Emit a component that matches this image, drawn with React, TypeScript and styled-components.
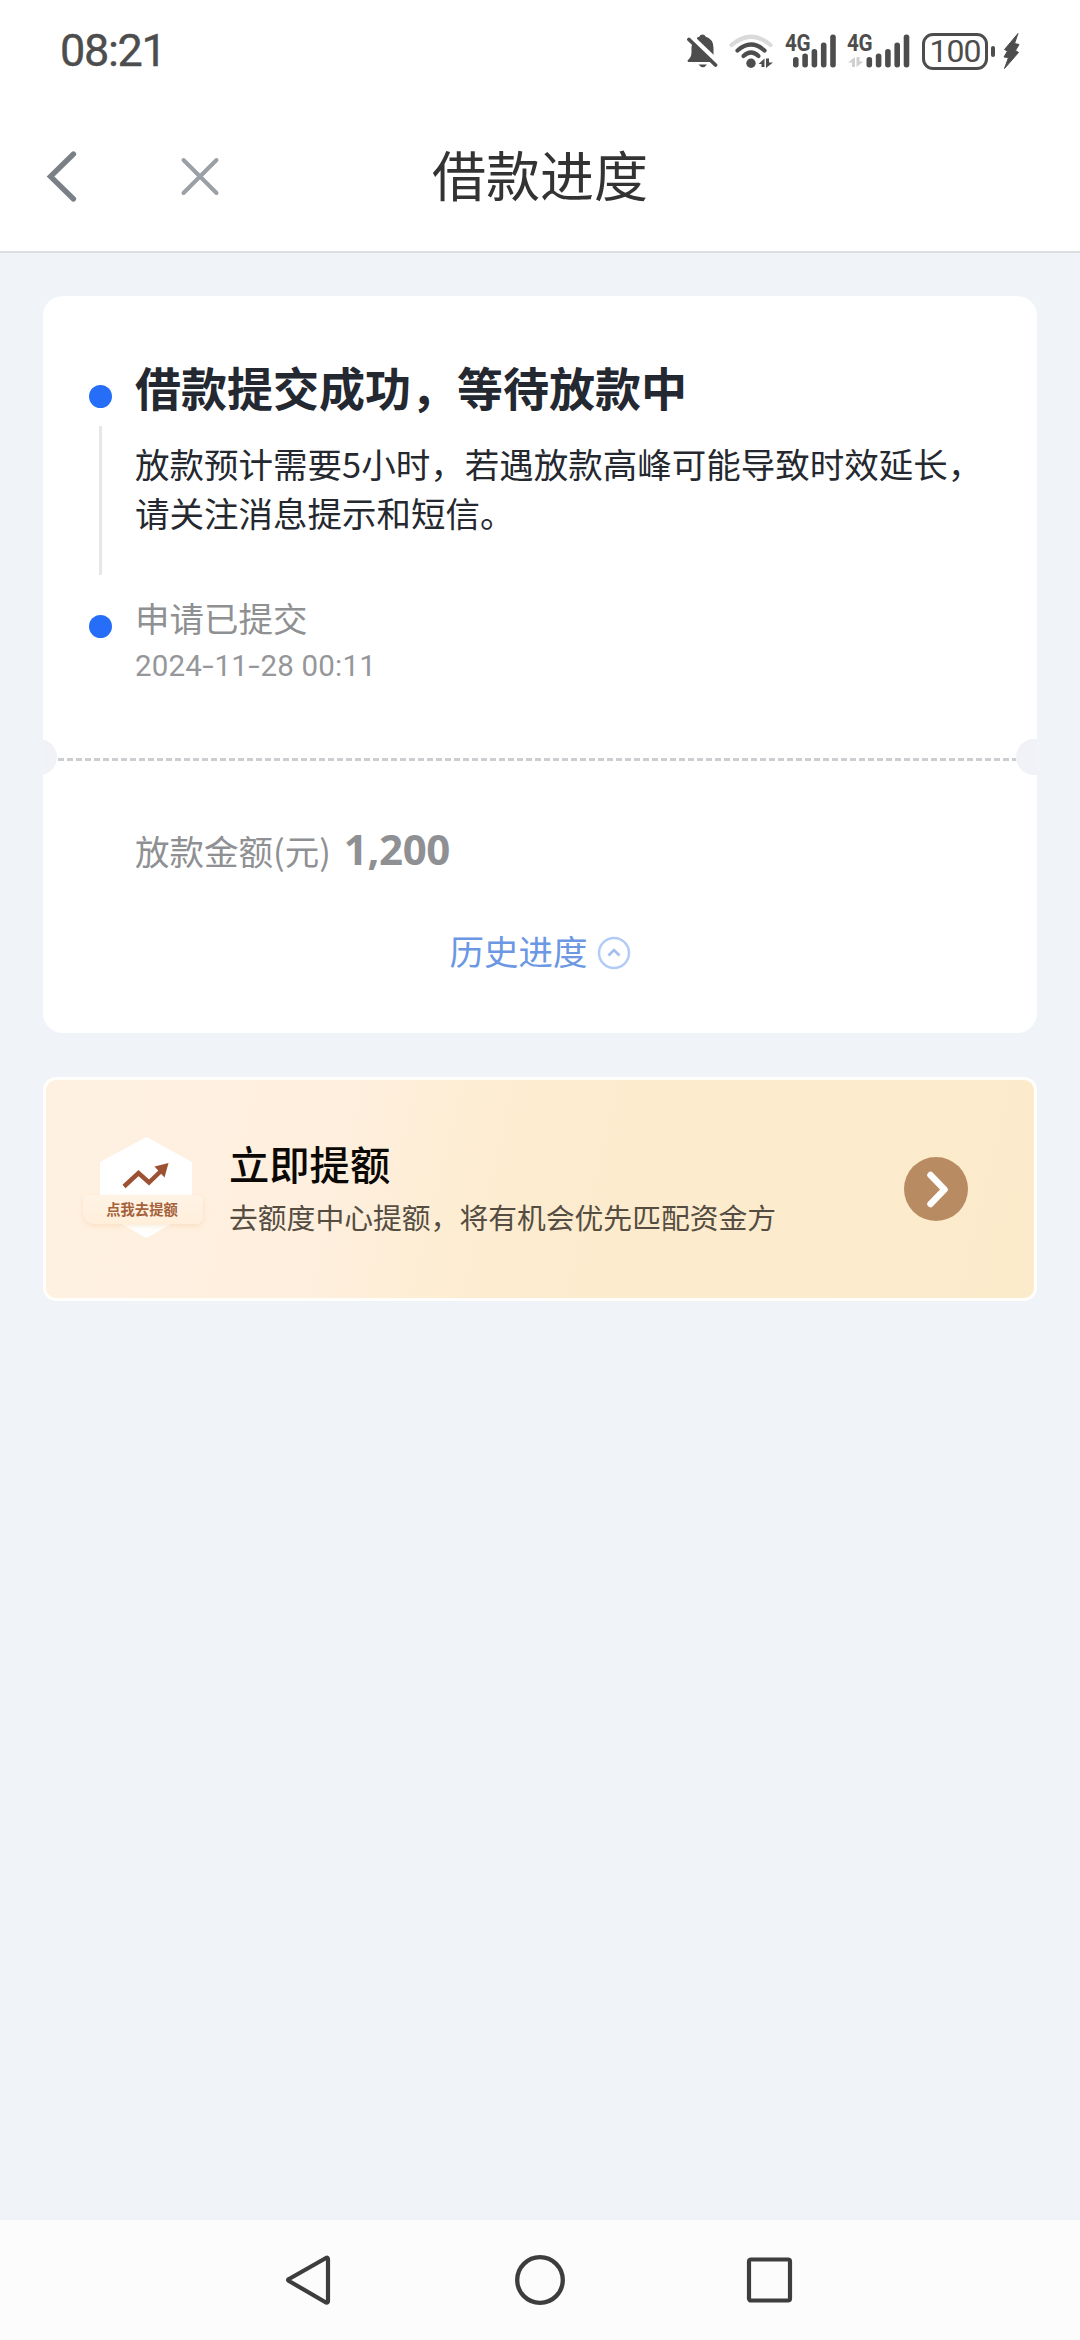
import React from 'react';
import styled, { createGlobalStyle } from 'styled-components';

const cjk = `'Noto Sans CJK SC', sans-serif`;
const latin = `Roboto, 'Noto Sans CJK SC', sans-serif`;

const GlobalStyle = createGlobalStyle`
  body {
    margin: 0;
    background: #f0f3f8;
    font-family: ${cjk};
  }
  * {
    box-sizing: border-box;
  }
  svg {
    display: block;
    flex: none;
  }
`;

const Screen = styled.div`
  display: flex;
  flex-direction: column;
  width: 1080px;
  height: 2340px;
  overflow: hidden;
  background: #f0f3f8;
`;

const StatusBar = styled.header`
  display: flex;
  justify-content: space-between;
  align-items: center;
  height: 102px;
  padding: 0 60px 0 60px;
  background: #fff;
`;

const Clock = styled.time`
  font: 400 45px/50px ${latin};
  letter-spacing: -1.3px;
  color: #4d4d4d;
  -webkit-text-stroke: 0.4px #4d4d4d;
`;

const StatusIcons = styled.div`
  display: flex;
  align-items: center;
`;

const Spacer = styled.span<{ $w: number }>`
  width: ${(p) => p.$w}px;
`;

const Signal = styled.div<{ $w: number }>`
  position: relative;
  width: ${(p) => p.$w}px;
  height: 34px;
`;

const SignalLabel = styled.span`
  position: absolute;
  left: -1px;
  top: -1px;
  font: 700 24px/20px ${latin};
  letter-spacing: -0.5px;
  color: #4d4d4d;
  transform: scaleX(0.86);
  transform-origin: left;
`;

const Battery = styled.div`
  display: flex;
  justify-content: center;
  align-items: center;
  width: 66px;
  height: 37px;
  border: 3px solid #4d4d4d;
  border-radius: 11px;
  font: 400 32px/32px ${latin};
  letter-spacing: -1px;
  color: #4d4d4d;
`;

const BatteryTip = styled.span`
  width: 4px;
  height: 11px;
  margin: 0 8px 0 3px;
  border-radius: 2px;
  background: #4d4d4d;
`;

const NavBar = styled.nav`
  display: grid;
  grid-template-columns: 180px 1fr 180px;
  align-items: center;
  height: 151px;
  padding: 0 45px;
  border-bottom: 2px solid #dcdde0;
  background: #fff;
`;

const NavActions = styled.div`
  display: flex;
  align-items: center;
  gap: 101px;
`;

const NavTitle = styled.h1`
  margin: 0;
  padding-bottom: 5px;
  font-size: 54px;
  line-height: 80px;
  font-weight: 400;
  text-align: center;
  color: #333;
`;

const Content = styled.main`
  display: flex;
  flex: 1;
  flex-direction: column;
  gap: 44px;
  padding: 43px 43px 0;
`;

const Card = styled.section`
  height: 737px;
  border-radius: 20px;
  background: #fff;
  overflow: hidden;
`;

const Timeline = styled.div`
  display: flex;
  flex-direction: column;
  height: 443px;
  padding: 62px 40px 0 46px;
`;

const Step = styled.div`
  display: flex;
  gap: 23px;
`;

const Rail = styled.div<{ $top: number }>`
  display: flex;
  flex-direction: column;
  align-items: center;
  gap: 18px;
  width: 23px;
  padding-top: ${(p) => p.$top}px;
`;

const Dot = styled.span`
  width: 23px;
  height: 23px;
  border-radius: 50%;
  background: #266ef8;
`;

const RailLine = styled.span`
  width: 3px;
  height: 149px;
  background: #e5e8e9;
`;

const StepBody = styled.div<{ $h: number }>`
  flex: 1;
  height: ${(p) => p.$h}px;
`;

const StepTitle = styled.h2`
  margin: 0;
  font-size: 46px;
  line-height: 56px;
  font-weight: 700;
  color: #232831;
  white-space: nowrap;
`;

const StepText = styled.p`
  margin: 25px 0 0;
  font-size: 34.5px;
  line-height: 49px;
  color: #25292f;
  white-space: nowrap;
`;

const StepLabel = styled.div`
  font-size: 34.5px;
  line-height: 48px;
  color: #8e9092;
`;

const StepTime = styled.time`
  display: block;
  margin-top: 5px;
  font: 400 29.5px/40px ${latin};
  letter-spacing: 0.2px;
  color: #95979a;
`;

const TimeDash = styled.span`
  display: inline-block;
  margin: 0 2px;
  transform: scaleX(1.4);
`;

const Divider = styled.div`
  display: flex;
  align-items: center;
  justify-content: space-between;
  height: 36px;
  margin: 0 -15px 0 -22px;
`;

const Notch = styled.span`
  width: 36px;
  height: 36px;
  border-radius: 50%;
  background: #f0f2f8;
`;

const Dashes = styled.span`
  flex: 1;
  height: 3px;
  margin: 5px 0 0 1px;
  background: repeating-linear-gradient(90deg, #cdced2 0 6px, transparent 6px 9px);
`;

const AmountRow = styled.div`
  display: flex;
  align-items: baseline;
  height: 60px;
  margin-top: 47px;
  padding-left: 92px;
  color: #8e9093;
`;

const AmountLabel = styled.span`
  font-size: 34.5px;
  line-height: 54px;
`;

const AmountValue = styled.strong`
  margin-left: 13px;
  font: 700 42px/54px 'Noto Sans', sans-serif;
  letter-spacing: -0.4px;
`;

const HistoryToggle = styled.button`
  display: flex;
  align-items: center;
  justify-content: center;
  gap: 9px;
  width: 100%;
  height: 50px;
  margin-top: 43px;
  padding: 0;
  border: 0;
  background: none;
  font: 400 34.5px/50px ${cjk};
  color: #6b97e3;
`;

const ToggleIcon = styled.svg`
  margin-top: 6px;
`;

const Banner = styled.section`
  display: flex;
  align-items: center;
  height: 224px;
  padding: 0 66px 0 37px;
  border: 3px solid #fffefb;
  border-radius: 13px;
  background: linear-gradient(104deg, #fff1e2 0%, #feefde 30%, #fdedd3 42%, #fcebcd 56%, #fcebcb 100%);
`;

const Badge = styled.div`
  position: relative;
  width: 120px;
  height: 104px;
  margin-right: 26px;
`;

const BadgeRibbon = styled.div`
  position: absolute;
  left: 0;
  top: 58px;
  width: 120px;
  height: 29px;
  padding-right: 2px;
  border-radius: 3px 7px 7px 12px;
  background: linear-gradient(180deg, #fff3e6, #ffefda);
  box-shadow: 0 2px 5px rgba(240, 200, 150, 0.4);
  font: 700 14.3px/28px ${cjk};
  text-align: center;
  color: #a5613c;
`;

const BannerText = styled.div`
  flex: 1;
  padding-bottom: 3px;
`;

const BannerTitle = styled.h3`
  margin: 0;
  font-size: 40.3px;
  line-height: 56px;
  font-weight: 500;
  color: #0b0805;
`;

const BannerNote = styled.p`
  margin: 2px 0 0;
  font-size: 28.8px;
  line-height: 48px;
  color: #554d42;
`;

const SystemBar = styled.footer`
  display: flex;
  align-items: center;
  justify-content: center;
  gap: 180px;
  height: 120px;
  background: #fcfcfc;
`;

const INK = '#4d4d4d';

const MutedBell = () => (
  <svg width="31" height="35" viewBox="0 0 31 35">
    <path
      fill={INK}
      d="M15.500 0.500Q18 0.500 18.500 2.500Q26.500 5 26.500 14V24L24 28H2Q0.500 28 0.500 26.500Q4.500 23.500 4.500 18V13Q5 5 12.500 2.500Q13 0.500 15.500 0.500Z"
    />
    <path d="M3.500 2 30 27.500" stroke="#fff" strokeWidth="5" />
    <path d="M0 0H10V8Z" fill="#fff" />
    <path d="M11.500 30.500H20Q16 36 11.500 30.500Z" fill={INK} />
    <path d="M2 5.500 28.500 31" stroke={INK} strokeWidth="3.800" strokeLinecap="round" />
  </svg>
);

const Wifi = () => (
  <svg width="45" height="35" viewBox="0 0 45 35" fill="none" strokeLinecap="round" strokeWidth="4.200">
    <path d="M2.500 11Q22 -5.500 41.500 11" stroke="#dadada" />
    <path d="M8.500 16.500Q22 4.500 35.500 16.500" stroke={INK} />
    <path d="M14.500 22Q22 15 29.500 22" stroke={INK} />
    <circle cx="22" cy="29.300" r="4.700" fill={INK} />
    <path d="M29.500 30 35.500 24.500V33H32.500V30ZM44 28.500 37 34V24.500H40V28.500Z" fill={INK} />
  </svg>
);

const BAR_TOPS = [23, 19.5, 15, 8.5, 0.5];

const SignalBars = ({ offset, arrows }: { offset: number; arrows?: boolean }) => (
  <svg width="64" height="34" viewBox="0 0 64 34" fill={INK}>
    {BAR_TOPS.map((top, i) => (
      <rect key={top} x={offset + i * 9.3} y={top} width="5.600" height={33.5 - top} rx="2.700" />
    ))}
    {arrows && <path d="M0 28.500 7 23V33H4V28.500ZM15.500 27.500 8.500 33V23H11.500V27.500Z" fill="#cfcfcf" />}
  </svg>
);

const Bolt = () => (
  <svg width="17" height="38" viewBox="0 0 17 38">
    <path
      d="M15 1.500 1.500 17.500 4.500 19 1 25 5.500 25.500 1.500 36.500 15.500 20.500 12.500 18.500 16 12.500 11.500 11.500Z"
      fill={INK}
      stroke={INK}
      strokeLinejoin="round"
    />
  </svg>
);

export default function App() {
  return (
    <>
      <GlobalStyle />
      <Screen>
        <StatusBar>
          <Clock>08:21</Clock>
          <StatusIcons>
            <MutedBell />
            <Spacer $w={11} />
            <Wifi />
            <Spacer $w={12} />
            <Signal $w={50}>
              <SignalLabel>4G</SignalLabel>
              <SignalBars offset={7} />
            </Signal>
            <Spacer $w={12} />
            <Signal $w={62}>
              <SignalLabel>4G</SignalLabel>
              <SignalBars offset={18.5} arrows />
            </Signal>
            <Spacer $w={12} />
            <Battery>100</Battery>
            <BatteryTip />
            <Bolt />
          </StatusIcons>
        </StatusBar>

        <NavBar>
          <NavActions>
            <svg width="34" height="54" viewBox="0 0 34 54" fill="none">
              <path d="M28.500 4 5.500 26.500 28.500 49" stroke="#7b8086" strokeWidth="5.300" strokeLinecap="round" />
            </svg>
            <svg width="40" height="40" viewBox="0 0 40 40" fill="none">
              <path d="M3.500 3 36.500 36M36.500 3 3.500 36" stroke="#9b9fa6" strokeWidth="4" strokeLinecap="round" />
            </svg>
          </NavActions>
          <NavTitle>借款进度</NavTitle>
        </NavBar>

        <Content>
          <Card>
            <Timeline>
              <Step>
                <Rail $top={27}>
                  <Dot />
                  <RailLine />
                </Rail>
                <StepBody $h={235}>
                  <StepTitle>借款提交成功，等待放款中</StepTitle>
                  <StepText>
                    放款预计需要5小时，若遇放款高峰可能导致时效延长，
                    <br />
                    请关注消息提示和短信。
                  </StepText>
                </StepBody>
              </Step>
              <Step>
                <Rail $top={22}>
                  <Dot />
                </Rail>
                <StepBody $h={100}>
                  <StepLabel>申请已提交</StepLabel>
                  <StepTime>
                    2024<TimeDash>-</TimeDash>11<TimeDash>-</TimeDash>28 00:11
                  </StepTime>
                </StepBody>
              </Step>
            </Timeline>
            <Divider>
              <Notch />
              <Dashes />
              <Notch />
            </Divider>
            <AmountRow>
              <AmountLabel>放款金额(元)</AmountLabel>
              <AmountValue>1,200</AmountValue>
            </AmountRow>
            <HistoryToggle>
              历史进度
              <ToggleIcon width="34" height="34" viewBox="0 0 34 34" fill="none">
                <circle cx="17" cy="17" r="15" stroke="#b3ccf7" strokeWidth="2.500" />
                <path d="M11.500 19.500 17 14 22.500 19.500" stroke="#a3bdee" strokeWidth="2.600" />
              </ToggleIcon>
            </HistoryToggle>
          </Card>

          <Banner>
            <Badge>
              <svg width="120" height="104" viewBox="0 0 120 104">
                <path d="M63.500 0 109 25V75L63.500 101 17 75V25Z" fill="#fff" />
                <path d="M41 49.500 55.500 36 66 45.500 79 33" stroke="#9d5133" strokeWidth="4.500" fill="none" />
                <path d="M71.500 29.500 85.500 26 81.500 40.500Z" fill="#9d5133" />
              </svg>
              <BadgeRibbon>点我去提额</BadgeRibbon>
            </Badge>
            <BannerText>
              <BannerTitle>立即提额</BannerTitle>
              <BannerNote>去额度中心提额，将有机会优先匹配资金方</BannerNote>
            </BannerText>
            <svg width="64" height="64" viewBox="0 0 64 64">
              <circle cx="32" cy="32" r="32" fill="#b98b62" />
              <path
                d="M26.500 18 40.500 32.500 26.500 47"
                fill="none"
                stroke="#fff"
                strokeWidth="6.500"
                strokeLinecap="round"
                strokeLinejoin="round"
              />
            </svg>
          </Banner>
        </Content>

        <SystemBar>
          <svg width="50" height="50" viewBox="0 0 50 50" fill="none">
            <path d="M41 3 4 24Q2 25 4 26L41 47.500Q43 48 43 46V4.500Q43 2 41 3Z" stroke="#3d3d3d" strokeWidth="4.200" strokeLinejoin="round" />
          </svg>
          <svg width="50" height="50" viewBox="0 0 50 50" fill="none">
            <circle cx="25" cy="25" r="22.800" stroke="#3d3d3d" strokeWidth="4.300" />
          </svg>
          <svg width="50" height="50" viewBox="0 0 50 50" fill="none">
            <rect x="4" y="4.500" width="41" height="41" rx="2" stroke="#3d3d3d" strokeWidth="4.200" />
          </svg>
        </SystemBar>
      </Screen>
    </>
  );
}
